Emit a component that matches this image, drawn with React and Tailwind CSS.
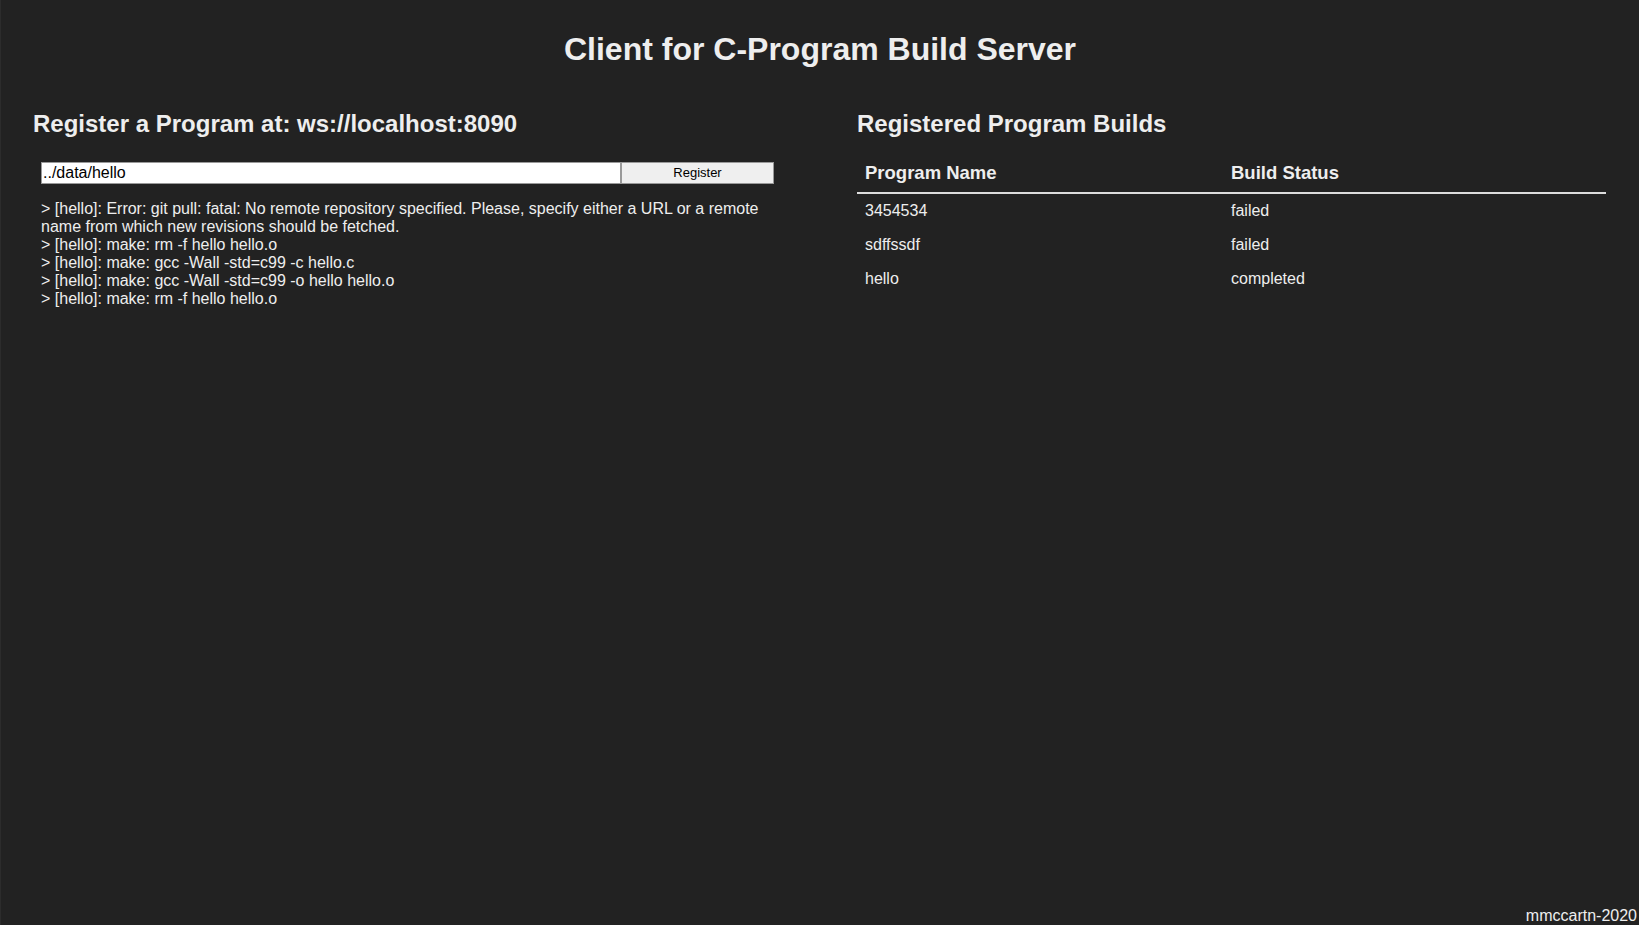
import React from "react";

const logs = [
  "> [hello]: Error: git pull: fatal: No remote repository specified. Please, specify either a URL or a remote name from which new revisions should be fetched.",
  "> [hello]: make: rm -f hello hello.o",
  "> [hello]: make: gcc -Wall -std=c99 -c hello.c",
  "> [hello]: make: gcc -Wall -std=c99 -o hello hello.o",
  "> [hello]: make: rm -f hello hello.o",
];

const builds = [
  ["3454534", "failed"],
  ["sdffssdf", "failed"],
  ["hello", "completed"],
];

export default function App() {
  return (
    <div
      className="min-h-screen h-[925px] flex flex-col bg-[#222222] text-[#eeeeee] border-l border-[#2c2c2c]"
      style={{ fontFamily: '"Liberation Sans", Arial, sans-serif' }}
    >
      <h1 className="text-[32px] font-bold text-center leading-[37px] mt-[31px]">
        Client for C-Program Build Server
      </h1>
      <div className="flex px-[32px] mt-[42px] gap-[75px]">
        <div className="w-[749px] shrink-0">
          <h2 className="text-[24px] font-bold leading-[28px]">
            Register a Program at: ws://localhost:8090
          </h2>
          <div className="mx-[8px] mt-[24px] flex h-[22px]">
            <input
              className="flex-1 h-[22px] bg-white text-black text-[16px] px-[1px] border border-[#999] outline-none leading-[20px]"
              style={{ fontFamily: '"Liberation Sans", Arial, sans-serif' }}
              defaultValue="../data/hello"
            />
            <button className="w-[153px] h-[22px] bg-[#efefef] text-black text-[13px] border border-[#999] leading-[20px]">
              Register
            </button>
          </div>
          <div className="mx-[8px] mt-[16px] text-[16px] leading-[18px]">
            {logs.map((l, i) => (
              <div key={i}>{l}</div>
            ))}
          </div>
        </div>
        <div className="w-[749px] shrink-0">
          <h2 className="text-[24px] font-bold leading-[28px]">
            Registered Program Builds
          </h2>
          <table className="w-full mt-[17px] border-collapse text-left">
            <thead>
              <tr className="border-b-2 border-[#dddddd]">
                <th className="w-[366px] px-[8px] pt-[7px] pb-[9px] text-[18.5px] font-bold leading-[21px]">
                  Program Name
                </th>
                <th className="px-[8px] pt-[7px] pb-[9px] text-[18.5px] font-bold leading-[21px]">
                  Build Status
                </th>
              </tr>
            </thead>
            <tbody>
              {builds.map(([n, s]) => (
                <tr key={n}>
                  <td className="px-[8px] py-[8px] text-[16px] leading-[18px]">{n}</td>
                  <td className="px-[8px] py-[8px] text-[16px] leading-[18px]">{s}</td>
                </tr>
              ))}
            </tbody>
          </table>
        </div>
      </div>
      <div className="mt-auto text-right pr-[2px] text-[16px] leading-[18px]">
        mmccartn-2020
      </div>
    </div>
  );
}
